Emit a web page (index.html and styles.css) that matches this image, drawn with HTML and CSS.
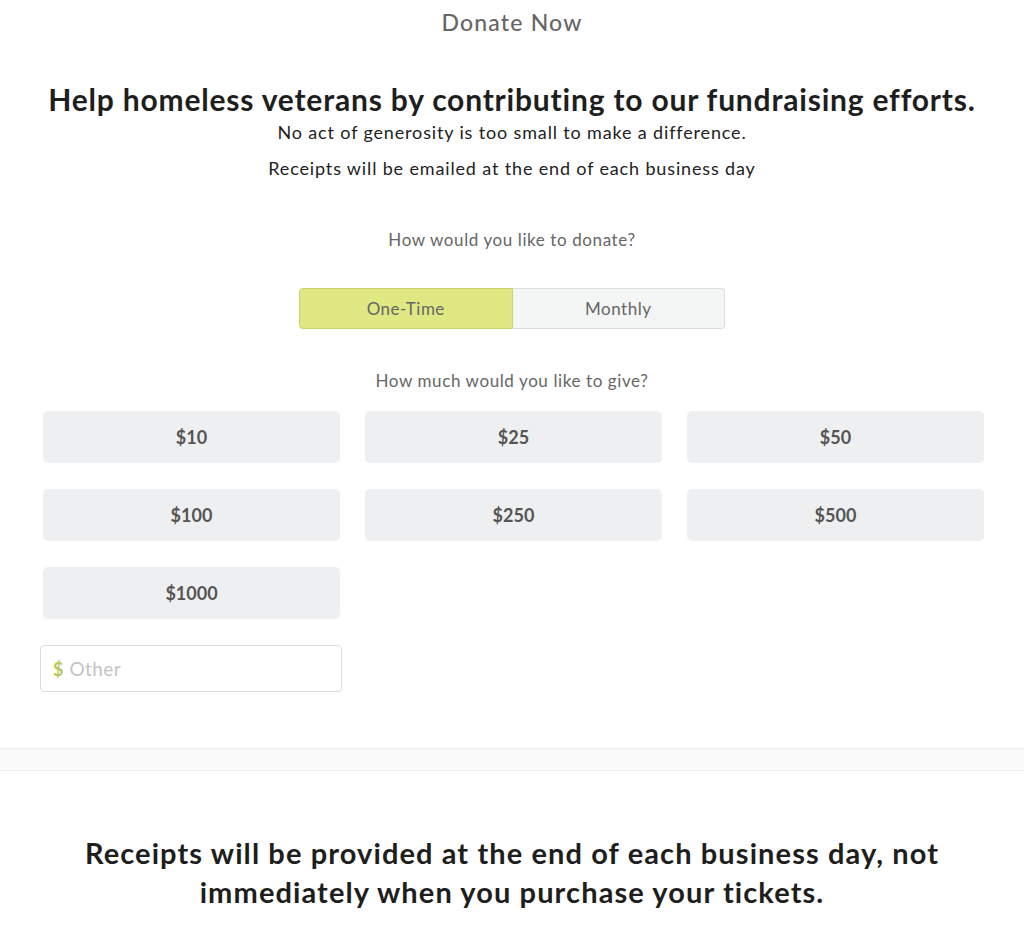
FILE: index.html
```html
<!DOCTYPE html>
<html lang="en">
  <head>
    <meta charset="UTF-8" />
    <title>Donate Now</title>
    <link rel="stylesheet" href="styles.css">
  </head>
  <body>
    <div id="page">
      <h2 class="page-title">Donate Now</h2>

      <div class="intro">
        <h1>Help homeless veterans by contributing to our fundraising efforts.</h1>
        <p>No act of generosity is too small to make a difference.</p>
        <p>Receipts will be emailed at the end of each business day</p>
      </div>

      <div class="donate-form">
        <p class="question">How would you like to donate?</p>
        <div class="frequency">
          <button class="freq-button is-active">One-Time</button>
          <button class="freq-button">Monthly</button>
        </div>

        <p class="question">How much would you like to give?</p>
        <div class="amounts">
          <button class="amount">$10</button>
          <button class="amount">$25</button>
          <button class="amount">$50</button>
          <button class="amount">$100</button>
          <button class="amount">$250</button>
          <button class="amount">$500</button>
          <button class="amount">$1000</button>
        </div>

        <label class="other">
          <span class="other-sign">$</span>
          <input type="text" placeholder="Other" />
        </label>
      </div>
    </div>

    <div class="divider"></div>

    <div id="notice">
      <h2>Receipts will be provided at the end of each business day, not immediately when you purchase your tickets.</h2>
    </div>
  </body>
</html>
```

FILE: styles.css
```css
html {
  height: 100%;
}
body {
  margin: 0;
  background-color: #fff;
  font-family: "Lato", "Open Sans", sans-serif;
  color: #222;
}

#page {
  padding: 0 40px;
}

.page-title {
  margin: 0;
  padding-top: 8px;
  font-size: 23px;
  font-weight: 500;
  letter-spacing: 1.2px;
  color: #666;
  text-align: center;
  line-height: 28px;
}

.intro {
  margin-top: 45px;
  text-align: center;
}
.intro h1 {
  margin: 0;
  font-size: 30px;
  font-weight: 700;
  letter-spacing: 0.8px;
  color: #1e1e1e;
  line-height: 36px;
}
.intro p {
  margin: 14px 0;
  font-size: 18px;
  letter-spacing: 0.85px;
  line-height: 22px;
  color: #222;
}
.intro h1 + p {
  margin-top: 4px;
}

.donate-form {
  display: flex;
  flex-direction: column;
  align-items: center;
}

.question {
  margin: 37px 0 0;
  font-size: 17px;
  letter-spacing: 0.6px;
  color: #666;
  line-height: 20px;
}

.frequency {
  display: flex;
  margin-top: 38px;
  width: 426px;
}
.freq-button {
  flex: 1;
  height: 41px;
  font-family: inherit;
  font-size: 17px;
  letter-spacing: 0.5px;
  color: #666;
  background: #f4f5f5;
  border: 1px solid #dcdddd;
  border-left: none;
  border-radius: 0 4px 4px 0;
  cursor: pointer;
}
.freq-button.is-active {
  background: #e0e883;
  border: 1px solid #c9d36a;
  border-radius: 4px 0 0 4px;
}

.frequency + .question {
  margin-top: 42px;
}

.amounts {
  align-self: stretch;
  display: grid;
  grid-template-columns: repeat(3, 1fr);
  column-gap: 25px;
  row-gap: 26px;
  margin: 20px 0 0;
  padding: 0 0 0 3px;
}
.amount {
  height: 52px;
  font-family: inherit;
  font-size: 18px;
  font-weight: 700;
  color: #555;
  background: #eeeff1;
  border: none;
  border-radius: 5px;
  cursor: pointer;
}

.other {
  align-self: flex-start;
  display: flex;
  align-items: center;
  gap: 6px;
  box-sizing: border-box;
  width: 302px;
  height: 47px;
  margin-top: 26px;
  padding: 0 12px;
  border: 1px solid #dcdcdc;
  border-radius: 4px;
}
.other-sign {
  font-size: 18px;
  font-weight: 700;
  color: #b4c85a;
}
.other input {
  flex: 1;
  border: none;
  outline: none;
  font-family: inherit;
  font-size: 19px;
  letter-spacing: 0.4px;
  color: #333;
  padding: 0;
  background: none;
}
.other input::placeholder {
  color: #c4c4c4;
}

.divider {
  margin-top: 56px;
  height: 21px;
  background: #fafafa;
  border-top: 1px solid #ececec;
  border-bottom: 1px solid #ececec;
}

#notice {
  padding: 62px 60px 0;
  text-align: center;
}
#notice h2 {
  margin: 0;
  font-size: 29px;
  font-weight: 700;
  letter-spacing: 1.1px;
  line-height: 39px;
  color: #1e1e1e;
}
```
